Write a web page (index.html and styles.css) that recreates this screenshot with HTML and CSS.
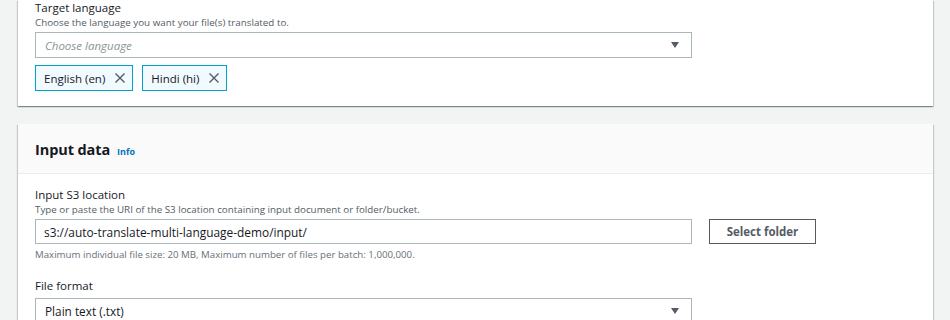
FILE: index.html
```html
<!DOCTYPE html>
<html lang="en">
<head>
  <meta charset="UTF-8" />
  <title>Create translation job</title>
  <link rel="stylesheet" href="styles.css">
</head>
<body>

<main class="page">

  <section class="card card-top">
    <div class="field">
      <label class="field-label">Target language</label>
      <p class="field-hint">Choose the language you want your file(s) translated to.</p>
      <div class="select placeholder">
        <span>Choose language</span>
        <span class="caret"></span>
      </div>
      <div class="tokens">
        <div class="token">English (en)
          <svg class="token-x" viewBox="0 0 12 12"><path d="M1.5 1.5l9 9M10.5 1.5l-9 9"/></svg>
        </div>
        <div class="token">Hindi (hi)
          <svg class="token-x" viewBox="0 0 12 12"><path d="M1.5 1.5l9 9M10.5 1.5l-9 9"/></svg>
        </div>
      </div>
    </div>
  </section>

  <section class="card">
    <div class="card-header">
      <h2>Input data</h2>
      <a class="info" href="#">Info</a>
    </div>
    <div class="card-body">
      <div class="field">
        <label class="field-label">Input S3 location</label>
        <p class="field-hint">Type or paste the URI of the S3 location containing input document or folder/bucket.</p>
        <div class="input-row">
          <input class="input" type="text" value="s3://auto-translate-multi-language-demo/input/">
          <button class="btn">Select folder</button>
        </div>
        <p class="field-note">Maximum individual file size: 20 MB, Maximum number of files per batch: 1,000,000.</p>
      </div>

      <div class="field">
        <label class="field-label">File format</label>
        <div class="select">
          <span>Plain text (.txt)</span>
          <span class="caret"></span>
        </div>
      </div>
    </div>
  </section>

</main>

</body>
</html>
```

FILE: styles.css
```css
* {
  margin: 0;
  padding: 0;
  box-sizing: border-box;
}

html, body {
  font-family: 'Open Sans', 'Noto Sans', Arial, sans-serif;
  background-color: #f2f3f3;
  color: #16191f;
  overflow: hidden;
}

.page {
  padding: 0 17px 0 18px;
}

/* Cards */

.card {
  background: #fff;
  box-shadow: 0 1px 1px 0 rgba(0, 28, 36, 0.3), 1px 1px 1px 0 rgba(0, 28, 36, 0.15), -1px 1px 1px 0 rgba(0, 28, 36, 0.15);
  margin-bottom: 18px;
}

.card-top {
  padding: 0 17px 15px;
}

.card-top .field {
  margin-bottom: 0;
}

.card-header {
  display: flex;
  align-items: baseline;
  gap: 7px;
  height: 50px;
  padding: 15px 17px 0;
  background: #fafafa;
  border-bottom: 1px solid #eaeded;
}

.card-header h2 {
  font-size: 14.5px;
  font-weight: 700;
  line-height: 22px;
  letter-spacing: -0.1px;
}

.info {
  color: #0073bb;
  font-size: 9px;
  font-weight: 700;
  text-decoration: none;
}

.card-body {
  padding: 13px 17px 0;
}

/* Fields */

.field {
  margin-bottom: 16px;
}

.field-label {
  display: block;
  font-size: 11.5px;
  line-height: 15px;
}

.field-hint {
  font-size: 9.8px;
  line-height: 15px;
  color: #545b64;
}

.field-note {
  font-size: 9.7px;
  line-height: 14px;
  margin-top: 4px;
  color: #687078;
}

.field > .select {
  margin-top: 5px;
}

.card-top .field > .select {
  margin-top: 2px;
}

.select {
  width: 657px;
  height: 26px;
  display: flex;
  align-items: center;
  justify-content: space-between;
  padding: 0 12px 0 9px;
  border: 1px solid #aab7b8;
  font-size: 11.8px;
  background: #fff;
}

.select.placeholder span:first-child {
  color: #879596;
  font-style: italic;
  font-size: 11.5px;
}

.caret {
  width: 0;
  height: 0;
  border-left: 4.5px solid transparent;
  border-right: 4.5px solid transparent;
  border-top: 6.5px solid #545b64;
}

.tokens {
  display: flex;
  gap: 9px;
  margin-top: 7px;
}

.token {
  display: flex;
  align-items: center;
  gap: 9px;
  height: 26px;
  padding: 0 6px 0 8px;
  background: #f1faff;
  border: 1px solid #00a1c9;
  font-size: 11.5px;
}

.token-x {
  width: 12px;
  height: 12px;
  stroke: #545b64;
  stroke-width: 1.4;
  fill: none;
}

.input-row {
  display: flex;
  gap: 17px;
  margin-top: 2px;
}

.input {
  width: 657px;
  height: 25px;
  padding: 0 8px;
  border: 1px solid #aab7b8;
  font-family: inherit;
  font-size: 11.9px;
  color: #16191f;
  outline: none;
}

.btn {
  width: 107px;
  height: 25px;
  background: #fff;
  border: 1px solid #545b64;
  color: #545b64;
  font-family: inherit;
  font-size: 11.5px;
  font-weight: 700;
}
```
